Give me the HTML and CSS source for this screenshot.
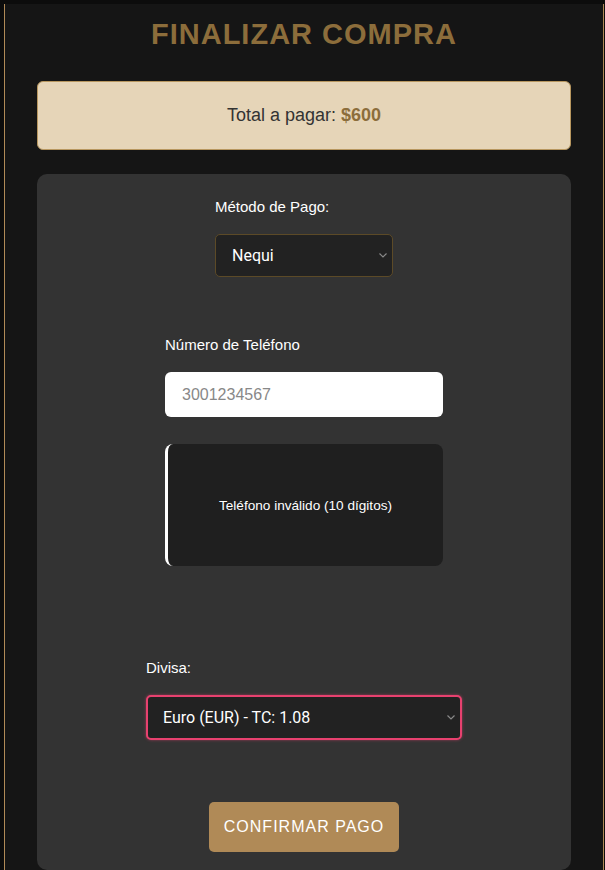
FILE: index.html
```html
<!DOCTYPE html>
<html lang="es">
<head>
  <meta charset="UTF-8">
  <meta name="viewport" content="width=device-width, initial-scale=1.0">
  <title>Finalizar Compra</title>
  <link rel="stylesheet" href="styles.css">
</head>
<body>
  <div class="checkout">
    <h1>FINALIZAR COMPRA</h1>

    <div class="total">Total a pagar: <strong>$600</strong></div>

    <form class="card" onsubmit="return false;">
      <div class="group group-method">
        <label for="metodo">Método de Pago:</label>
        <select id="metodo" class="select">
          <option>Nequi</option>
          <option>Daviplata</option>
          <option>Tarjeta</option>
        </select>
      </div>

      <div class="group group-phone">
        <label for="telefono">Número de Teléfono</label>
        <input id="telefono" type="tel" placeholder="3001234567">
        <div class="error">Teléfono inválido (10 dígitos)</div>
      </div>

      <div class="group group-currency">
        <label for="divisa">Divisa:</label>
        <select id="divisa" class="select select-focus">
          <option>Euro (EUR) - TC: 1.08</option>
          <option>Dólar (USD) - TC: 1.00</option>
        </select>
      </div>

      <button type="submit">CONFIRMAR PAGO</button>
    </form>
  </div>
</body>
</html>
```

FILE: styles.css
```css
body {
  margin: 0;
  padding-top: 4px;
  background: #0c0c0c;
  font-family: "Liberation Sans", Arial, sans-serif;
}
.checkout {
  box-sizing: border-box;
  width: 600px;
  min-height: 866px;
  margin-left: 4px;
  padding: 13px 32px 0;
  background: #151515;
  border-left: 1px solid #b08a57;
  border-right: 1px solid #b08a57;
}
h1 {
  margin: 0 0 30px;
  font-size: 29px;
  line-height: 34px;
  letter-spacing: 1px;
  text-align: center;
  color: #8c6d3b;
}
.total {
  padding: 23px 0;
  font-size: 18px;
  line-height: 21px;
  text-align: center;
  color: #333;
  background: #e6d5b8;
  border: 1px solid #b8975f;
  border-radius: 6px;
}
.total strong {
  color: #8c6d3b;
}
.card {
  display: flex;
  flex-direction: column;
  align-items: center;
  margin-top: 24px;
  padding: 24px 0 18px;
  background: #333;
  border-radius: 10px;
}
.group {
  display: flex;
  flex-direction: column;
}
label {
  margin-bottom: 19px;
  font-size: 15px;
  line-height: 17px;
  color: #fff;
}
.group-method {
  width: 178px;
}
.group-phone {
  width: 278px;
  margin-top: 59px;
}
.group-currency {
  width: 316px;
  margin-top: 93px;
}
.select {
  -webkit-appearance: none;
  appearance: none;
  box-sizing: border-box;
  height: 43px;
  padding: 0 16px;
  font-family: Roboto, "Liberation Sans", sans-serif;
  font-size: 16px;
  color: #fff;
  background-color: #222;
  background-image: url("data:image/svg+xml;utf8,<svg xmlns='http://www.w3.org/2000/svg' width='8' height='5' viewBox='0 0 8 5'><path d='M0.5 0.5 L4 4 L7.5 0.5' fill='none' stroke='%23888' stroke-width='1.2'/></svg>");
  background-repeat: no-repeat;
  background-position: right 5px center;
  border: 1px solid #5c4a27;
  border-radius: 5px;
  outline: none;
}
.select-focus {
  height: 45px;
  padding-left: 15px;
  border: 2px solid #e8416f;
  box-shadow: 0 0 3px rgba(232, 65, 111, 0.6);
}
input {
  box-sizing: border-box;
  height: 45px;
  padding: 0 17px;
  font-family: "Liberation Sans", Arial, sans-serif;
  font-size: 16px;
  color: #333;
  background: #fff;
  border: none;
  border-radius: 6px;
  outline: none;
}
input::placeholder {
  color: #888;
}
.error {
  display: flex;
  align-items: center;
  justify-content: center;
  height: 122px;
  margin-top: 27px;
  font-size: 13.6px;
  color: #fff;
  background: #1f1f1f;
  border-left: 3px solid #fff;
  border-radius: 8px;
}
button {
  margin-top: 62px;
  height: 50px;
  padding: 0 15px;
  font-family: "Liberation Sans", Arial, sans-serif;
  font-size: 16px;
  letter-spacing: 1px;
  color: #fff;
  background: #b08a57;
  border: none;
  border-radius: 5px;
  cursor: pointer;
}
```
